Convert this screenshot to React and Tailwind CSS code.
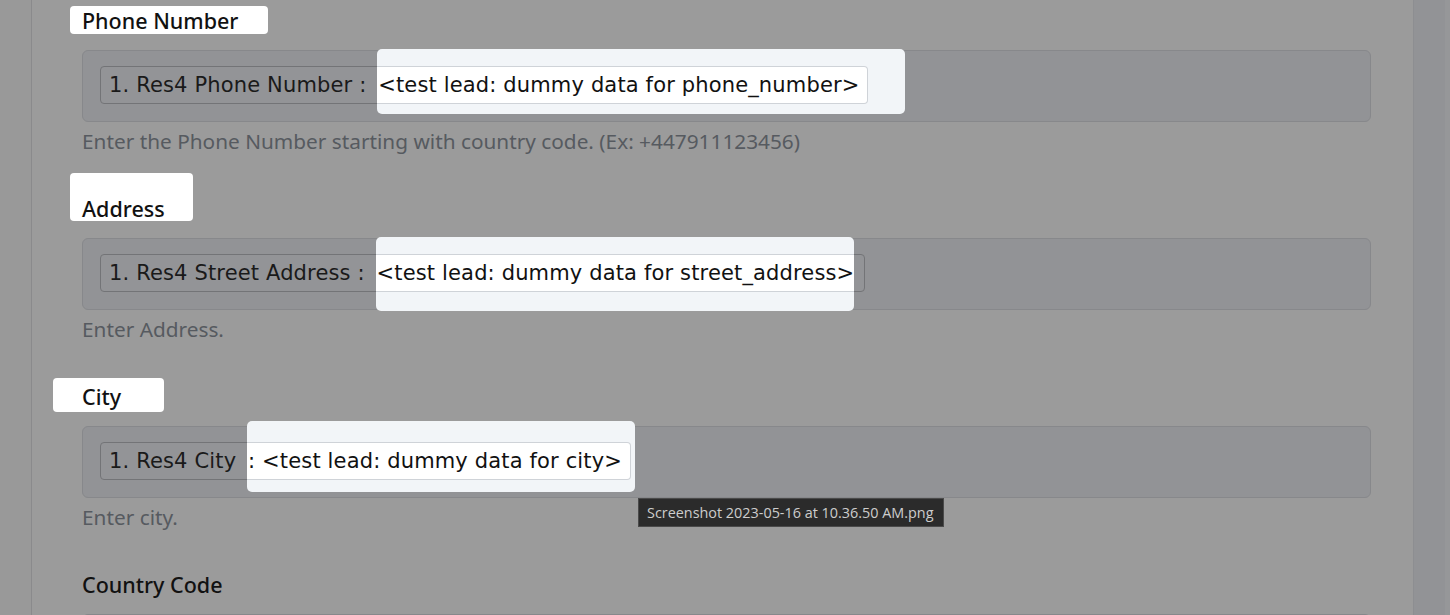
import React from 'react'

const labelFont = { fontFamily: '"Noto Sans", Lato, sans-serif' }

// white cut-out boxes drawn over the dimmed page
const LabelSpot = ({ text, spotClass }) => (
  <div className="relative h-[28px] leading-[28px] text-[21.5px] font-medium text-[#111]">
    <span className={`absolute rounded-[4px] bg-white ${spotClass}`} />
    <span className="relative top-[1px]">{text}</span>
  </div>
)

const FieldRow = ({ prefix, value, spotClass, pieceClass, inputClass }) => (
  <div className="mt-[16px] h-[72px] rounded-[6px] border border-[#87888b] bg-[#929396] pl-[17px] pt-[15px]">
    <div
      className={`inline-block h-[38px] rounded-[4px] border border-[#737477] bg-[#939497] pl-[8px] leading-[36px] text-[21px] tracking-[0.15px] text-[#1a1a1a] whitespace-pre ${inputClass}`}
      style={{ fontFamily: '"DejaVu Sans", Verdana, sans-serif' }}
    >
      <span className="mr-[5px]">{prefix}</span>
      <span className="relative inline-block">
        <span className={`absolute rounded-[5px] bg-[#f2f5f8] ${spotClass}`} />
        <span className={`absolute top-[-1px] bottom-[-1px] border-y border-[#cfd3d8] bg-white ${pieceClass}`} />
        <span className="relative text-[#111]">{value}</span>
      </span>
    </div>
  </div>
)

const Helper = ({ children }) => (
  <p className="mt-[4px] mb-[40px] h-[28px] pt-[1px] leading-[28px] text-[20.8px] text-[#565a60]">{children}</p>
)

export default function App() {
  return (
    <div className="relative flex h-[615px] w-[1450px] overflow-hidden bg-[#999a9c]" style={labelFont}>
      <div className="w-[32px] shrink-0 border-r border-[#8a8a8c] bg-[#999999]" />

      <main className="flex-1 bg-[#9b9b9b] pl-[50px] pr-[42px] pt-[6px]">
        <LabelSpot text="Phone Number" spotClass="left-[-12px] top-0 h-[28px] w-[198px]" />
        <FieldRow
          prefix="1. Res4 Phone Number : "
          value="<test lead: dummy data for phone_number>"
          spotClass="left-[-1px] right-[-46px] top-[-18px] bottom-[-11px]"
          pieceClass="left-[-1px] right-[-9px] border-r rounded-r-[4px]"
          inputClass="pr-[8px]"
        />
        <Helper>Enter the Phone Number starting with country code. (Ex: +447911123456)</Helper>

        <LabelSpot text="Address" spotClass="left-[-12px] top-[-21px] h-[48px] w-[123px]" />
        <FieldRow
          prefix="1. Res4 Street Address : "
          value="<test lead: dummy data for street_address>"
          spotClass="left-[-1px] right-[0px] top-[-18px] bottom-[-20px]"
          pieceClass="left-[-1px] right-[0px]"
          inputClass="pr-[10px]"
        />
        <Helper>Enter Address.</Helper>

        <LabelSpot text="City" spotClass="left-[-29px] top-[-4px] h-[34px] w-[111px]" />
        <FieldRow
          prefix="1. Res4 City "
          value=": <test lead: dummy data for city>"
          spotClass="left-[-1px] right-[-13px] top-[-22px] bottom-[-13px]"
          pieceClass="left-[-1px] right-[-9px] border-r rounded-r-[4px]"
          inputClass="pr-[8px]"
        />
        <Helper>Enter city.</Helper>

        <div className="h-[28px] pt-[1px] leading-[28px] text-[21.5px] font-medium text-[#111]">Country Code</div>
        <div className="mt-[16px] h-[72px] rounded-[6px] border border-[#87888b] bg-[#929396]" />
      </main>

      <div className="w-[32px] shrink-0 border-l border-[#8d8e91] bg-[#929396]" />
      <div className="w-[5px] shrink-0 bg-[#969799]" />

      {/* file name tooltip */}
      <div
        className="absolute left-[638px] top-[498px] h-[29px] border border-[#4a4a4a] bg-[#2b2b2b] pl-[8px] pr-[9px] leading-[27px] text-[14.4px] text-[#cdcdcd]"
        style={{ fontFamily: '"Open Sans", "Noto Sans", sans-serif' }}
      >
        Screenshot 2023-05-16 at 10.36.50 AM.png
      </div>
    </div>
  )
}
